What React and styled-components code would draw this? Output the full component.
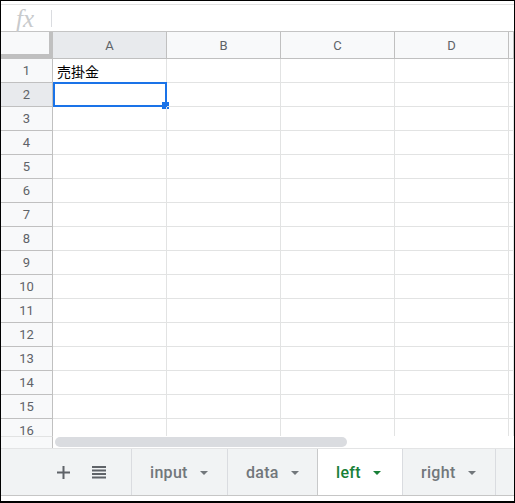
import React from "react";
import styled, { createGlobalStyle } from "styled-components";

const GlobalStyle = createGlobalStyle`
  html, body {
    margin: 0;
    padding: 0;
    background: #fff;
  }
  * {
    box-sizing: border-box;
  }
`;

const Frame = styled.div`
  width: 515px;
  height: 503px;
  border: 1px solid #000;
  border-bottom-width: 2px;
  display: flex;
  flex-direction: column;
  font-family: Roboto, "Liberation Sans", Arial, sans-serif;
  background: #fff;
  overflow: hidden;
`;

const FormulaBar = styled.div`
  margin-top: 3px;
  height: 28px;
  flex: none;
  display: flex;
  align-items: center;
  border-top: 1px solid #e3e3e3;
  border-bottom: 1px solid #c4c4c4;
`;

const Fx = styled.span`
  width: 51px;
  padding-left: 15px;
  font-family: "Liberation Serif", "Times New Roman", serif;
  font-style: italic;
  font-size: 25px;
  color: #c8cacc;
  line-height: 1;
  border-right: 1px solid #dadce0;
  height: 17px;
  display: flex;
  align-items: center;
`;

const Sheet = styled.div`
  height: 404px;
  flex: none;
  overflow: hidden;
  display: grid;
  grid-template-columns: 52px repeat(4, 114px) 1fr;
  grid-auto-rows: 24px;
  grid-template-rows: 27px;
`;

const Corner = styled.div`
  background: #f8f9fa;
  border-right: 4px solid #c0c0c0;
  border-bottom: 5px solid #c0c0c0;
`;

const ColHead = styled.div`
  background: ${p => (p.$active ? "#e8eaed" : "#f8f9fa")};
  border-right: 1px solid #c0c0c0;
  border-bottom: 1px solid #c0c0c0;
  display: flex;
  align-items: center;
  justify-content: center;
  font-size: 13px;
  color: #5f6368;
`;

const RowHead = styled.div`
  background: ${p => (p.$active ? "#e8eaed" : "#f8f9fa")};
  border-right: 1px solid #c0c0c0;
  border-bottom: 1px solid #c0c0c0;
  display: flex;
  align-items: center;
  justify-content: center;
  font-size: 13px;
  color: #5f6368;
`;

const Cell = styled.div`
  position: relative;
  border-right: 1px solid #e2e3e3;
  border-bottom: 1px solid #e2e3e3;
  display: flex;
  align-items: center;
  padding-left: 4px;
  font-family: Roboto, "Liberation Sans", "Noto Sans CJK JP", sans-serif;
  font-size: 14px;
  color: #000;
`;

const Selection = styled.div`
  position: absolute;
  top: -1px;
  left: 0;
  right: -1px;
  bottom: -1px;
  border: 2px solid #1a73e8;
  pointer-events: none;
`;

const Handle = styled.div`
  position: absolute;
  right: -3px;
  bottom: -3px;
  width: 7px;
  height: 7px;
  background: #1a73e8;
`;

const ScrollStrip = styled.div`
  height: 12px;
  flex: none;
  display: grid;
  grid-template-columns: 52px 1fr;
`;

const ScrollGutter = styled.div`
  background: #f8f9fa;
  border-top: 1px solid #e2e3e3;
  border-right: 1px solid #c0c0c0;
`;

const ScrollTrack = styled.div`
  padding: 1px 0 1px 2px;
`;

const Thumb = styled.div`
  width: 292px;
  height: 10px;
  border-radius: 5px;
  background: #dadce0;
`;

const TabBar = styled.div`
  height: 48px;
  flex: none;
  display: flex;
  background: #f1f3f4;
  border-top: 1px solid #e3e4e5;
  border-bottom: 1px solid #c6c6c6;
`;

const Tools = styled.div`
  width: 131px;
  display: flex;
  align-items: center;
  padding-left: 56px;
  gap: 22px;
  border-right: 1px solid #dadce0;
`;

const IconButton = styled.span`
  display: flex;
  align-items: center;
  justify-content: center;
  color: #5f6368;
`;

const Tab = styled.div`
  width: ${p => p.$width}px;
  display: flex;
  align-items: center;
  gap: 12px;
  padding: 0 0 0 18px;
  border-right: 1px solid #dadce0;
  background: ${p => (p.$active ? "#fff" : "transparent")};
  box-shadow: ${p => (p.$active ? "-1px 0 0 #c8c9ca" : "none")};
  color: ${p => (p.$active ? "#188038" : "#72777b")};
  font-size: 16px;
  font-weight: 500;
  letter-spacing: 0.3px;
`;

const Caret = styled.span`
  width: 0;
  height: 0;
  border-left: 4px solid transparent;
  border-right: 4px solid transparent;
  border-top: 4px solid currentColor;
  margin-top: 1px;
`;

const BottomGap = styled.div`
  flex: 1;
  background: #fff;
`;

const columns = ["A", "B", "C", "D", ""];
const rows = Array.from({ length: 16 }, (_, i) => i + 1);
const tabs = [
  { name: "input", width: 96 },
  { name: "data", width: 90 },
  { name: "left", width: 85, active: true },
  { name: "right", width: 93 }
];

const PlusIcon = () => (
  <svg width="13" height="13" viewBox="0 0 13 13">
    <rect x="5.5" y="0" width="2" height="13" fill="#5f6368" />
    <rect x="0" y="5.5" width="13" height="2" fill="#5f6368" />
  </svg>
);

const ListIcon = () => (
  <svg width="14" height="13" viewBox="0 0 14 13">
    {[0, 3.5, 7, 10.5].map(y => (
      <rect key={y} x="0" y={y} width="14" height="2" fill="#5f6368" />
    ))}
  </svg>
);

export default function App() {
  return (
    <>
      <GlobalStyle />
      <Frame>
        <FormulaBar>
          <Fx>fx</Fx>
        </FormulaBar>
        <Sheet>
          <Corner />
          {columns.map((c, i) => (
            <ColHead key={i} $active={c === "A"}>
              {c}
            </ColHead>
          ))}
          {rows.map(r => (
            <React.Fragment key={r}>
              <RowHead $active={r === 2}>{r}</RowHead>
              {columns.map((c, i) => (
                <Cell key={i}>
                  {r === 1 && c === "A" ? "売掛金" : null}
                  {r === 2 && c === "A" ? (
                    <>
                      <Selection />
                      <Handle />
                    </>
                  ) : null}
                </Cell>
              ))}
            </React.Fragment>
          ))}
        </Sheet>
        <ScrollStrip>
          <ScrollGutter />
          <ScrollTrack>
            <Thumb />
          </ScrollTrack>
        </ScrollStrip>
        <TabBar>
          <Tools>
            <IconButton>
              <PlusIcon />
            </IconButton>
            <IconButton>
              <ListIcon />
            </IconButton>
          </Tools>
          {tabs.map(t => (
            <Tab key={t.name} $width={t.width} $active={t.active}>
              {t.name}
              <Caret />
            </Tab>
          ))}
        </TabBar>
        <BottomGap />
      </Frame>
    </>
  );
}
